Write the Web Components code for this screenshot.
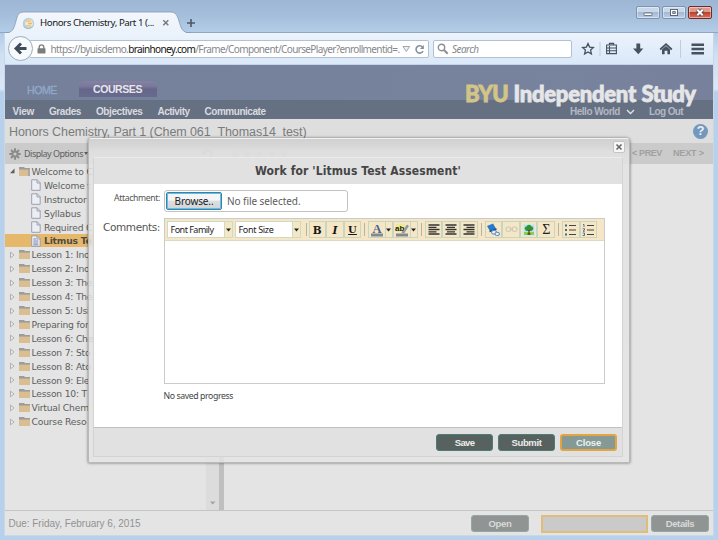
<!DOCTYPE html>
<html lang="en">
<head>
<meta charset="utf-8">
<title>Honors Chemistry, Part 1</title>
<style>
html,body{margin:0;width:718px;height:540px;overflow:hidden}
body{font-family:"Liberation Sans",sans-serif}
</style>
</head>
<body>
<browser-window></browser-window>
<script>
function define(name, html, setup) {
  const tpl = document.createElement('template');
  tpl.innerHTML = html;
  customElements.define(name, class extends HTMLElement {
    constructor() {
      super();
      this.attachShadow({mode: 'open'});
    }
    connectedCallback() {
      if (this.shadowRoot.childNodes.length) return;
      this.shadowRoot.appendChild(tpl.content.cloneNode(true));
      if (setup) setup.call(this, this.shadowRoot);
    }
  });
}

// One line of text whose tracking is adjusted to span the width given in "w".
define('fit-text', `<style>:host{display:inline-block;white-space:pre;line-height:1;flex:none}</style><slot></slot>`, function () {
  const w = parseFloat(this.getAttribute('w'));
  if (!w) return;
  const n = this.textContent.length;
  const natural = this.getBoundingClientRect().width;
  this.style.letterSpacing = ((w - natural) / n).toFixed(3) + 'px';
});

define('caption-button', `<style>
:host{display:grid;place-items:center;box-sizing:border-box;width:24px;height:13px;border:1px solid #7d93ae;border-radius:2px;background:linear-gradient(#c9d8e9 45%,#a3bad4 50%,#b9cfe6);box-shadow:inset 0 0 0 1px #ffffff66}
:host([kind=close]){border-color:#6e2d2d;background:linear-gradient(#dd9b8f 45%,#bf4029 50%,#d6745c)}
svg{display:none}
:host([kind=min]) .min,:host([kind=max]) .max,:host([kind=close]) .close{display:block}
</style>
<svg class="min" width="12" height="9"><rect x="2" y="5" width="8" height="2.6" rx=".5" fill="#fff" stroke="#5c6674" stroke-width=".9"/></svg>
<svg class="max" width="12" height="9"><rect x="2.5" y="1.5" width="7" height="6" fill="#fff" stroke="#5c6674"/><rect x="4.7" y="3.6" width="2.6" height="1.8" fill="#9ab0ca" stroke="#5c6674" stroke-width=".8"/></svg>
<svg class="close" width="12" height="9"><path d="M3.3 1.7l5.4 5.6M8.7 1.7L3.3 7.3" stroke="#54404a" stroke-width="3.6"/><path d="M3.3 1.7l5.4 5.6M8.7 1.7L3.3 7.3" stroke="#fff" stroke-width="2"/></svg>`);

define('title-bar', `<style>
:host{display:flex;height:33px;box-sizing:border-box;position:relative;background:linear-gradient(#9cb6d4,#a5bedb 50%,#b3cce7);border-bottom:1px solid #8fa6c4;font-family:"Noto Sans","Open Sans",sans-serif}
.shape{position:absolute;left:5px;top:11px}
.tab{position:relative;display:flex;align-items:center;width:157px;height:22px;margin:12px 0 0 22px;color:#16181c;font-size:9.700px}
.fav{margin-right:5px}.x{margin-left:8px}
.plus{margin:18px 0 0 7px;position:relative}
.caps{display:flex;gap:2px;margin:6px 6px 0 auto}
</style>
<svg class="shape" width="186" height="23"><defs><linearGradient id="g" x2="0" y2="1"><stop stop-color="#f3f7fc"/><stop offset="1" stop-color="#ebf2fb"/></linearGradient></defs><path d="M0 22.5C8 22 9 17 11 10C12.500 4 13.500 1 19 1H165C171 1 172 4 174 10C176 17 177 22 186 22.500V23H0Z" fill="url(#g)"/><path d="M0 22C8 22 9 17 11 10C12.500 4 13.500 1 19 1H165C171 1 172 4 174 10C176 17 177 22 186 22" fill="none" stroke="#8199b8" stroke-width=".8"/></svg>
<div class="tab">
<svg class="fav" width="13" height="13"><circle cx="6.500" cy="6.500" r="5.700" fill="#b9cfdc"/><circle cx="7" cy="6.500" r="3.900" fill="#efead1"/><path d="M4 4.200h5M6 6.500h4M4 8.800h5" stroke="#efb96a" stroke-width="1.300"/><path d="M1.500 8.500c1 3 6 4 9 1" stroke="#8cc1d3" fill="none"/></svg>
<fit-text w="114">Honors Chemistry, Part 1 (...</fit-text>
<svg class="x" width="8" height="8"><path d="M1.300 1.300l5 5M6.300 1.300l-5 5" stroke="#77797c" stroke-width="1.500"/></svg>
</div>
<svg class="plus" width="10" height="10"><path d="M5 1v8M1 5h8" stroke="#4d5867" stroke-width="1.600"/></svg>
<div class="caps"><caption-button kind="min"></caption-button><caption-button kind="max"></caption-button><caption-button kind="close"></caption-button></div>`);

define('tool-bar', `<style>
:host{display:flex;align-items:center;height:32px;position:relative;box-sizing:border-box;background:linear-gradient(#ecf3fb,#dae8f8);border-bottom:1px solid #c4d3e6;font-family:"Noto Sans","Open Sans",sans-serif;font-size:10px;color:#85888d}
.back{margin-left:2px;flex:none;position:relative}
.url,.search{display:flex;flex:none;align-items:center;box-sizing:border-box;height:18px;border:1px solid #b3c1d2;background:#fff;border-radius:2px}
.url{width:400px;margin-left:-5px;border-left:0;padding-left:7.500px;padding-top:1px}
.lock{margin-right:5px;flex:none}
b{font-weight:400;color:#111}
.search{width:139px;margin-left:4px;padding:1px 0 0 3px;font-style:italic}
.drop{margin-left:2.500px}.re{margin-left:3px}
.icons{display:flex;align-items:center;margin-left:9px}
</style>
<svg class="back" width="27" height="27"><circle cx="13.500" cy="13.500" r="12" fill="#f7fafd" stroke="#9babc0"/><path d="M14 8.500L9 13.500L14 18.500M9 13.500H19.500" stroke="#424b58" stroke-width="2.900" fill="none"/></svg>
<div class="url">
<svg class="lock" width="9" height="10"><path d="M2.200 5V3.200a2.300 2.300 0 0 1 4.600 0V5" fill="none" stroke="#808080" stroke-width="1.400"/><rect x=".5" y="4.300" width="8" height="5.200" rx=".8" fill="#7c7c7c"/></svg>
<fit-text w="349">https://byuisdemo.<b>brainhoney.com</b>/Frame/Component/CoursePlayer?enrollmentid=.</fit-text>
<svg class="drop" width="9" height="8"><path d="M1 1.500h6.600L4.300 6.500z" fill="#edf0f4" stroke="#9fa7b1"/></svg>
<svg class="re" width="11" height="11"><path d="M8.600 3A3.700 3.700 0 1 0 9 7.200" fill="none" stroke="#8591a1" stroke-width="1.600"/><path d="M5.900 4.900h4V1z" fill="#8591a1"/></svg>
</div>
<div class="search"><svg width="12" height="12" style="margin-right:3px"><circle cx="4.500" cy="4.500" r="3.200" fill="none" stroke="#8b8f95" stroke-width="1.400"/><path d="M7 7l3.700 3.700" stroke="#8b8f95" stroke-width="2"/></svg><fit-text w="26.500">Search</fit-text></div>
<div class="icons">
<svg width="130" height="24" viewBox="0 0 130 24" fill="none" stroke="#465261">
<path d="M7 6.600l1.600 3.500 3.800.4-2.800 2.600.8 3.800L7 15l-3.400 1.900.8-3.800-2.800-2.600 3.800-.4z" stroke-width="1.300"/>
<path d="M19 5v14M99.500 3v18" stroke="#c0cddd"/>
<path d="M25.600 8h9.800v8.600h-9.800zM25 11h11M25 13.800h11M28.500 9v8" stroke-width="1.100"/><path d="M28.500 8V6.500h4V8" stroke-width="1.300"/>
<path d="M55.400 6.500h3.800v5h3.100L57.300 17.200 52 11.500h3.400z" fill="#465261" stroke="none"/>
<path d="M79.200 12.500L85 7.200l5.800 5.300" stroke-width="1.800"/><path d="M81 12.600l4-3.600 4 3.600V17.300H86.400V13.800H83.600v3.500H81z" fill="#465261" stroke="none"/>
<path d="M110.500 7.800h12.500M110.500 12h12.500M110.500 16.200h12.500" stroke-width="2.500"/></svg>
</div>`);

define('site-header', `<style>
:host{display:flex;flex-direction:column;height:54px;background:linear-gradient(90deg,#75819b,#77839d 70%,#78819b);position:relative}
.top{display:flex;height:35px;align-items:flex-end;box-sizing:border-box;font-size:10.500px}
.home{color:#91a9c9;margin:0 0 5px 22px;-webkit-text-stroke:.3px}
.courses{margin:0 0 3px 21.500px;width:78px;height:16px;box-sizing:border-box;padding-top:1px;display:grid;place-items:center;border-radius:6px 6px 0 0;color:#e6e6ea;font-weight:700;background:linear-gradient(#8582a3,#79779a 35%,#65678a 50%,#686b8d)}
.nav{display:flex;height:19px;align-items:center;background:#667083;color:#d9dbdf;font-weight:700;font-size:10px;padding-left:7.500px;gap:15px;padding-top:4px;box-sizing:border-box}
.brand{position:absolute;right:17.500px;top:18px;display:flex;gap:5.500px;font:900 22px Lato,sans-serif;color:#e6e6e7;-webkit-text-stroke:.8px}
.brand .y{color:#d4c485}
.user{display:flex;align-items:center;margin-left:auto;margin-right:30px;font-weight:700;color:#b3b8c2}
</style>
<div class="top"><fit-text class="home" w="30">HOME</fit-text><div class="courses"><fit-text w="49">COURSES</fit-text></div></div>
<div class="nav"><fit-text w="21.500">View</fit-text><fit-text w="32">Grades</fit-text><fit-text w="46.500">Objectives</fit-text><fit-text w="32">Activity</fit-text><fit-text w="61">Communicate</fit-text>
<div class="user"><fit-text w="50">Hello World</fit-text><svg width="9" height="6" style="margin:0 14px 0 6px"><path d="M1 1l3.500 3.500L8 1" fill="none" stroke="#dfe2e7" stroke-width="1.400"/></svg><fit-text w="34">Log Out</fit-text></div></div>
<div class="brand"><fit-text class="y" w="43">BYU</fit-text><fit-text w="122.500">Independent</fit-text><fit-text w="54">Study</fit-text></div>`);

define('course-title', `<style>
:host{display:flex;align-items:center;justify-content:space-between;height:24px;box-sizing:border-box;background:#dedede;padding:1px 5px 0 4px;color:#7b7b7b;font-size:12.500px}
fit-text{padding-top:1px}
.q{width:15px;height:15px;border-radius:50%;background:#7398bd;color:#eef2f6;display:grid;place-items:center;font:700 12.500px/15px "Liberation Sans",sans-serif}
</style><fit-text w="297.500">Honors Chemistry, Part 1 (Chem 061_Thomas14_test)</fit-text><div class="q">?</div>`);

define('options-bar', `<style>
:host{display:flex;align-items:center;height:21px;box-sizing:border-box;background:#cbcbcb;color:#606060;font-size:9px;padding-left:4px;font-family:"Noto Sans",sans-serif}
.gear{margin-right:3px}
.page{margin-left:auto;margin-right:9px;display:flex;gap:11px;color:#a0a0a0;font:700 9px "Liberation Sans",sans-serif}
.stars{margin-left:112px}
</style>
<svg class="gear" width="12" height="12" viewBox="-6 -6 12 12"><g stroke="#8b8b8b" stroke-width="2"><path d="M0-5.700V5.700M-5.700 0H5.700M-4-4L4 4M4-4L-4 4"/></g><circle r="3.600" fill="#8b8b8b"/><circle r="1.600" fill="#cbcbcb"/></svg>
<fit-text w="59">Display Options</fit-text><svg width="6" height="5"><path d="M1 1h4L3 4z" fill="#5f5f5f"/></svg>
<svg class="stars" width="90" height="12"><path d="M2 3v3h4M3 5a4 4 0 1 1 2 5" fill="none" stroke="#7d93c0" stroke-width="1.600"/><g fill="#aeb2ba"><path id="s" d="M34 2l1.200 2.800 3 .2-2.300 2 .8 3L34 8.400 31.300 10l.8-3-2.300-2 3-.2z"/><use href="#s" x="12"/><use href="#s" x="24.500"/><use href="#s" x="37"/><use href="#s" x="49"/></g></svg>
<div class="page"><fit-text w="30">&lt; PREV</fit-text><fit-text w="31">NEXT &gt;</fit-text></div>`);

define('tree-item', `<style>
:host{display:flex;align-items:center;height:13.920px;width:88px;box-sizing:border-box;padding:1px 0 0 4px;color:#5e5e5e;font-family:"DejaVu Sans",sans-serif;font-size:9.200px;letter-spacing:-.2px;white-space:pre}
:host([level="2"]){padding-left:25.500px}
:host([selected]){background:#e6b86b;font-weight:700;color:#504c45}
svg{flex:none;display:none}
:host(:not([level])) .arrow,:host(:not([level])) .folder,:host([level="2"]) .page{display:block}
.open,.lines{display:none}
:host([open]) .open,:host([selected]) .lines{display:inline}
:host([open]) .shut{display:none}
.arrow{margin-right:3px}.folder{margin-right:1.500px}.page{margin-right:3.500px}
</style>
<svg class="arrow" width="7" height="8"><path class="shut" d="M1.500 1.200L5 4L1.500 6.800z" fill="#eee" stroke="#a0a0a0" stroke-width=".8"/><path class="open" d="M5.500 1.500v4.700H1z" fill="#5d5d5d"/></svg>
<svg class="folder" width="11" height="11"><path d="M0 1h5l1 1h5v2H0z" fill="#9c9c9c"/><path d="M0 3.600h11V10H0z" fill="#dbbd92"/><path class="open" d="M9 3.500h2v6.500H9z" fill="#a8a8a8"/></svg>
<svg class="page" width="10" height="12"><path d="M.7.800h5.500l3 3v7.500H.7z" fill="#eceef3" stroke="#9299ab" stroke-width=".9"/><path d="M6 .800v3.200h3.200" fill="none" stroke="#9299ab" stroke-width=".9"/><path class="lines" d="M2.300 4h3M2.300 6h5M2.300 8h5M2.300 9.800h5" stroke="#7082a4" stroke-width=".9"/></svg>
<slot></slot>`);

define('course-tree', `<style>
:host{display:flex;height:346px;background:#e4e4e4}
.tree{width:201px;}
tree-item[selected]{width:201px}
.scroll{width:13px;background:#dcdcdc;display:flex;align-items:flex-end;justify-content:center}
.split{width:5px;background:#bfbfbf}
</style>
<div class="tree">
<tree-item open>Welcome to C</tree-item><tree-item level="2">Welcome t</tree-item><tree-item level="2">Instructor</tree-item><tree-item level="2">Syllabus</tree-item><tree-item level="2">Required C</tree-item><tree-item level="2" selected>Litmus Te</tree-item>
<tree-item>Lesson 1: Ino</tree-item><tree-item>Lesson 2: Ino</tree-item><tree-item>Lesson 3: The</tree-item><tree-item>Lesson 4: The</tree-item><tree-item>Lesson 5: Usi</tree-item><tree-item>Preparing for</tree-item><tree-item>Lesson 6: Che</tree-item><tree-item>Lesson 7: Sto</tree-item><tree-item>Lesson 8: Ato</tree-item><tree-item>Lesson 9: Ele</tree-item><tree-item>Lesson 10: T</tree-item><tree-item>Virtual Chem</tree-item><tree-item>Course Reso</tree-item>
</div>
<div class="scroll"><svg width="7" height="11"><path d="M1 2.500h5.500L3.700 5.500z" fill="#a4a4a4"/></svg></div><div class="split"></div>`);

define('push-button', `<style>
:host{display:grid;place-items:center;box-sizing:border-box;width:57px;height:17.500px;border:1.500px solid #4b7c76;border-radius:3px;background:#57625f;color:#ececec;font:700 9.500px "Liberation Sans",sans-serif}
:host([kind=focus]){background:#869a95;border:2px solid #e3a544;color:#eef0ef}
:host([kind=dim]){width:58px;background:#909594;border-color:#94a7a4;color:#d9dada}
</style><slot></slot>`);

define('status-bar', `<style>
:host{display:flex;align-items:center;height:25px;box-sizing:border-box;border-top:1px solid #c4c4c4;background:#e4e4e4;color:#929292;font-size:10px;padding:1px 4px 0 3.500px}
.b1{margin-left:auto}
.field{box-sizing:border-box;width:107px;height:18px;border:2px solid #e1bd78;background:#cacaca;margin:0 3px 0 12px}
</style><fit-text w="132">Due: Friday, February 6, 2015</fit-text><push-button class="b1" kind="dim"><fit-text w="23">Open</fit-text></push-button><div class="field"></div><push-button kind="dim"><fit-text w="28.500">Details</fit-text></push-button>`);

define('font-select', `<style>
:host{display:flex;flex:none;align-items:center;justify-content:space-between;box-sizing:border-box;width:66px;height:17px;border:1px solid #cfdac5;background:#fff;color:#222;font:9px "Noto Sans",sans-serif;padding-left:2.500px}
div{width:7px;height:15px;background:#f4e7c6;border-left:1px solid #cfdac5;display:grid;place-items:center}
</style><slot></slot><div><svg width="5" height="4"><path d="M0 .5h5L2.500 3.500z" fill="#222"/></svg></div>`);

const glyphs = {
  B: '<span style="font:900 10.500px \'DejaVu Serif\',serif">B</span>',
  I: '<span style="font:italic 900 10.500px \'DejaVu Serif\',serif">I</span>',
  U: '<span style="font:700 10px \'DejaVu Serif\',serif;text-decoration:underline">U</span>',
  color: '<svg width="14" height="14"><text x="7" y="9.700" text-anchor="middle" font-family="Liberation Serif,serif" font-weight="700" font-size="12.500" fill="#4a6493">A</text><path d="M1 12h12" stroke="#85888d" stroke-width="3"/></svg>',
  mark: '<svg width="14" height="14"><path d="M1 1h9v8H1z" fill="#f0e98f"/><text x="0" y="8" font-family="Liberation Sans,sans-serif" font-weight="700" font-size="8" fill="#222">ab</text><path d="M7 9.500L12 2l1.500 1-4.500 7z" fill="#8ba5bd" stroke="#657487" stroke-width=".5"/><path d="M1 12h12" stroke="#85888d" stroke-width="3"/></svg>',
  drop: '<svg width="5" height="4"><path d="M0 .5h5L2.500 3.500z" fill="#222"/></svg>',
  left: '<svg width="12" height="11"><path d="M.5 1h11M.5 3.300h8M.5 5.500h11M.5 7.800h8M.5 10h11" stroke="#333" stroke-width="1.300"/></svg>',
  center: '<svg width="12" height="11"><path d="M.5 1h11M2 3.300h8M.5 5.500h11M2 7.800h8M.5 10h11" stroke="#333" stroke-width="1.300"/></svg>',
  right: '<svg width="12" height="11"><path d="M.5 1h11M3.500 3.300h8M.5 5.500h11M3.500 7.800h8M.5 10h11" stroke="#333" stroke-width="1.300"/></svg>',
  link: '<svg width="15" height="14"><path d="M1 3l6-2.500 3.500 6-6 2.500z" fill="#2779cb"/><path d="M3.500 8.500l7-2.500" stroke="#145799" stroke-width="1.500"/><g fill="#e5eef8" stroke="#5b83b5"><rect x="5.500" y="7.500" width="5" height="3.500" rx="1.700"/><rect x="9" y="9.300" width="4.500" height="3.200" rx="1.600"/></g></svg>',
  unlink: '<svg width="13" height="9"><g fill="none" stroke="#cfc9bb" stroke-width="1.200"><rect x="1" y="2" width="5" height="4.500" rx="2.200"/><rect x="7" y="2" width="5" height="4.500" rx="2.200"/><path d="M4.500 4.300h4"/></g></svg>',
  image: '<svg width="12" height="12"><path d="M.5.500h11v11H.5z" fill="#b9dfef" stroke="#d2e7ee"/><path d="M1 8h10v3H1z" fill="#8fce4d"/><path d="M2 5.500a2 2 0 0 1 1.500-3 2.700 2.700 0 0 1 5 0 2 2 0 0 1 1.500 3q-1 2-4 1.500-3 .5-4-1.500z" fill="#30942b"/><path d="M6 6v4M4.500 10h3" stroke="#59421e" stroke-width="1.300"/></svg>',
  sigma: '<span style="font:14px \'Liberation Serif\',serif;color:#222">Σ</span>',
  bullets: '<svg width="13" height="12"><path d="M1 1.500h2M1 6h2M1 10.500h2" stroke="#4c6387" stroke-width="2"/><path d="M5 1.500h7M5 6h7M5 10.500h7" stroke="#444" stroke-width="1.200"/></svg>',
  numbers: '<svg width="13" height="12"><path d="M1 .5h1V3M.7 4.700h1.800V6L1 7.200h1.800M.7 9h1.800v2.500H.7" stroke="#4c6387" stroke-width=".9" fill="none"/><path d="M5 1.500h7M5 6h7M5 10.500h7" stroke="#444" stroke-width="1.200"/></svg>'
};
define('tool-button', `<style>
:host{display:grid;place-items:center;place-content:center;flex:none;box-sizing:border-box;width:17.600px;height:17px;border:1px solid #c6d6c3;color:#161616;line-height:1}
:host([kind=drop]){width:7.200px;border-left:0}
svg{display:block}span{display:block;line-height:14px!important}
</style><div></div>`, function (root) {
  root.querySelector('div').innerHTML = glyphs[this.getAttribute('kind')];
});

define('rich-editor', `<style>
:host{display:flex;flex-direction:column;box-sizing:border-box;width:441px;height:166px;border:1px solid #cbcbcb;background:#fff}
.bar{display:flex;align-items:center;height:22px;background:#f5e7c5;padding-left:2px;box-sizing:border-box;border-bottom:1px solid #ddd8c8}
.sep{width:1px;height:13px;background:#b8b2a2;margin:0 3px 0 3px;flex:none}
font-select+font-select{margin-left:2px}
</style>
<div class="bar"><font-select><fit-text w="43">Font Family</fit-text></font-select><font-select><fit-text w="35">Font Size</fit-text></font-select><i class="sep" style="margin:0 2px 0 4.500px"></i>
<tool-button kind="B"></tool-button><tool-button kind="I"></tool-button><tool-button kind="U"></tool-button><i class="sep"></i>
<tool-button kind="color"></tool-button><tool-button kind="drop"></tool-button><tool-button kind="mark"></tool-button><tool-button kind="drop"></tool-button><i class="sep"></i>
<tool-button kind="left"></tool-button><tool-button kind="center"></tool-button><tool-button kind="right"></tool-button><i class="sep"></i>
<tool-button kind="link"></tool-button><tool-button kind="unlink"></tool-button><tool-button kind="image"></tool-button><tool-button kind="sigma"></tool-button><i class="sep"></i>
<tool-button kind="bullets"></tool-button><tool-button kind="numbers"></tool-button></div>`);

define('file-input', `<style>
:host{display:flex;align-items:center;box-sizing:border-box;width:184px;height:22px;border:1px solid #c2c2c2;border-radius:3px;background:#fff;padding-left:1px;font:10px "Noto Sans",sans-serif;color:#5c5c5c}
.b{display:grid;place-items:center;box-sizing:border-box;width:56px;height:18px;border:1px solid #3c7fa8;border-radius:2px;box-shadow:inset 0 0 0 1px #62bfe4;background:linear-gradient(#f3f5f6 45%,#dcdfe2 50%,#cfd5da);color:#1c1c1c;margin-right:5px}
</style><div class="b"><fit-text w="39">Browse..</fit-text></div><fit-text w="73.500">No file selected.</fit-text>`);

define('work-dialog', `<style>
:host{display:flex;flex-direction:column;box-sizing:border-box;width:542px;height:324.500px;padding:0 6px 5px 4px;border:1px solid #b9b9b9;border-top-color:#f1f1f1;border-radius:4px 4px 0 0;background:linear-gradient(#cfcfcfee,#dfdfdfee 12px,#e3e3e3dd 19px,#e5e5e5d0);box-shadow:0 0 3px #00000088}
.top{height:18px;display:flex;justify-content:flex-end;align-items:center;flex:none}
.x{width:10px;height:10px;border:1px solid #c5c5c5;border-radius:2px;background:#f7f7f7;display:grid;place-items:center;margin-right:-2px;margin-bottom:2px}
.panel{display:flex;flex-direction:column;flex:1;box-sizing:border-box;border:1px solid #d3d3d3;border-top-color:#ebebeb;background:#fff;min-height:0}
header{height:26px;background:#e1e1e1;display:grid;place-items:center;font:700 12px "DejaVu Sans Condensed","DejaVu Sans",sans-serif;color:#454545;flex:none}
main{display:grid;grid-template-columns:70px 441px;height:243px;align-content:start;row-gap:6px;padding-top:6px;box-sizing:border-box;color:#555}
label{justify-self:end;margin-right:4px;height:10px}
.a{font:8.700px "Noto Sans",sans-serif;margin-top:2px}.c{font:10.500px "DejaVu Sans",sans-serif;margin-top:3px}
.n{grid-column:2;justify-self:start;font:8.700px/1 "Noto Sans",sans-serif;color:#444;margin-top:2px;margin-left:-.5px}
footer{flex:1;display:flex;align-items:center;justify-content:flex-end;gap:5px;background:#e1e1e1;border-top:1px solid #bdc1c0;padding:1px 5px 0 0}
</style>
<div class="top"><div class="x"><svg width="8" height="8"><path d="M1.500 1.500l5 5M6.500 1.500l-5 5" stroke="#666" stroke-width="1.600"/></svg></div></div>
<div class="panel"><header><fit-text w="206">Work for 'Litmus Test Assesment'</fit-text></header>
<main><label class="a"><fit-text w="46">Attachment:</fit-text></label><file-input></file-input>
<label class="c"><fit-text w="57">Comments:</fit-text></label><rich-editor></rich-editor>
<fit-text class="n" w="69.500">No saved progress</fit-text></main>
<footer><push-button><fit-text w="19.500">Save</fit-text></push-button><push-button><fit-text w="30">Submit</fit-text></push-button><push-button kind="focus"><fit-text w="25">Close</fit-text></push-button></footer></div>`);

define('browser-window', `<style>
:host{display:block;position:relative;width:718px;height:540px;overflow:hidden;background:linear-gradient(#b3cce7 33px,#cfe0f3 55px,#dae7f6 89px,#b7d0eb 92px)}
.client{margin:0 5px;outline:1px solid #c9d8e8}
work-dialog{position:absolute;left:88px;top:138px}
</style>
<title-bar></title-bar>
<div class="client"><tool-bar></tool-bar><site-header></site-header><course-title></course-title><options-bar></options-bar><course-tree></course-tree><status-bar></status-bar></div>
<work-dialog></work-dialog>`);
</script>
</body>
</html>
